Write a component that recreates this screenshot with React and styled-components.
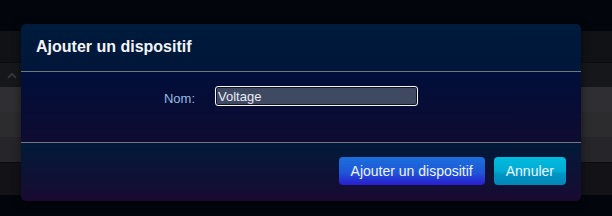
import React from "react";
import styled, { createGlobalStyle } from "styled-components";

const GlobalStyle = createGlobalStyle`
  html, body {
    margin: 0;
    padding: 0;
    background: #02050c;
    font-family: "Liberation Sans", Arial, sans-serif;
  }
`;

const Page = styled.div`
  position: relative;
  width: 612px;
  height: 216px;
  overflow: hidden;
  background: #02050c;
`;

const Backdrop = styled.div`
  display: flex;
  flex-direction: column;
  padding-top: 31px;
`;

const BgRow = styled.div`
  height: ${(p) => p.$h}px;
  background: ${(p) => p.$bg};
  border-top: ${(p) => (p.$line ? "1px solid #0c0c10" : "none")};
  box-sizing: border-box;
  display: flex;
  align-items: center;
  padding-left: 7px;
`;

const Modal = styled.div`
  position: absolute;
  left: 21px;
  top: 24px;
  width: 560px;
  height: 177px;
  border-radius: 5px;
  overflow: hidden;
  display: flex;
  flex-direction: column;
  box-shadow: 0 2px 8px rgba(0, 0, 0, 0.5);
`;

const Header = styled.div`
  height: 48px;
  box-sizing: border-box;
  display: flex;
  align-items: center;
  padding: 0 15px 1px;
  background: linear-gradient(#001b3b, #00163a);
  border-bottom: 1px solid #74767e;
`;

const Title = styled.h3`
  margin: 0;
  font-size: 16px;
  line-height: 18px;
  font-weight: 700;
  color: #f2f4f8;
`;

const Body = styled.div`
  height: 71px;
  box-sizing: border-box;
  padding-top: 14px;
  background: linear-gradient(#000f3a, #0f0b31);
  border-bottom: 1px solid #74767e;
`;

const FormRow = styled.div`
  display: grid;
  grid-template-columns: 174px 203px;
  column-gap: 20px;
  align-items: center;
`;

const Label = styled.label`
  text-align: right;
  font-size: 13px;
  color: #93bde3;
  padding-top: 4px;
`;

const Input = styled.input`
  width: 203px;
  height: 20px;
  box-sizing: border-box;
  margin: 0;
  padding: 0 2px;
  font-family: "Liberation Sans", Arial, sans-serif;
  font-size: 13px;
  color: #e6ecf6;
  caret-color: #ffffff;
  background: #3f4962;
  border: 1px solid #f4f6fa;
  border-radius: 3px;
  box-shadow: inset 0 0 0 1px #10142a;
  outline: none;
`;

const Footer = styled.div`
  flex: 1;
  display: flex;
  justify-content: flex-end;
  align-items: flex-start;
  gap: 9px;
  padding: 14px 15px 0 0;
  background: linear-gradient(#011a39, #190a32);
`;

const Button = styled.button`
  height: 28px;
  padding: 0 12px;
  border: none;
  border-radius: 4px;
  font-family: "Liberation Sans", Arial, sans-serif;
  font-size: 14px;
  color: #eef4ff;
  cursor: pointer;
  background: ${(p) =>
    p.$primary
      ? "linear-gradient(#1a70dc, #1f56d8 55%, #2a1ccf)"
      : "linear-gradient(#02bbdf, #00acd4 50%, #0094c3 62%, #0087b6)"};
`;

const Chevron = () => (
  <svg width="10" height="7" viewBox="0 0 10 7">
    <polyline points="1,6 5,2 9,6" fill="none" stroke="#3b3c44" strokeWidth="1.6" />
  </svg>
);

export default function App() {
  return (
    <Page>
      <GlobalStyle />
      <Backdrop>
        <BgRow $h={31} $bg="#111216" />
        <BgRow $h={25} $bg="#16171b" $line>
          <Chevron />
        </BgRow>
        <BgRow $h={25} $bg="#2f2f33" />
        <BgRow $h={25} $bg="#2c2c2f" />
        <BgRow $h={25} $bg="#26262a" />
        <BgRow $h={33} $bg="#131317" $line />
      </Backdrop>
      <Modal>
        <Header>
          <Title>Ajouter un dispositif</Title>
        </Header>
        <Body>
          <FormRow>
            <Label htmlFor="nom">Nom:</Label>
            <Input id="nom" defaultValue="Voltage" autoFocus />
          </FormRow>
        </Body>
        <Footer>
          <Button $primary>Ajouter un dispositif</Button>
          <Button>Annuler</Button>
        </Footer>
      </Modal>
    </Page>
  );
}
